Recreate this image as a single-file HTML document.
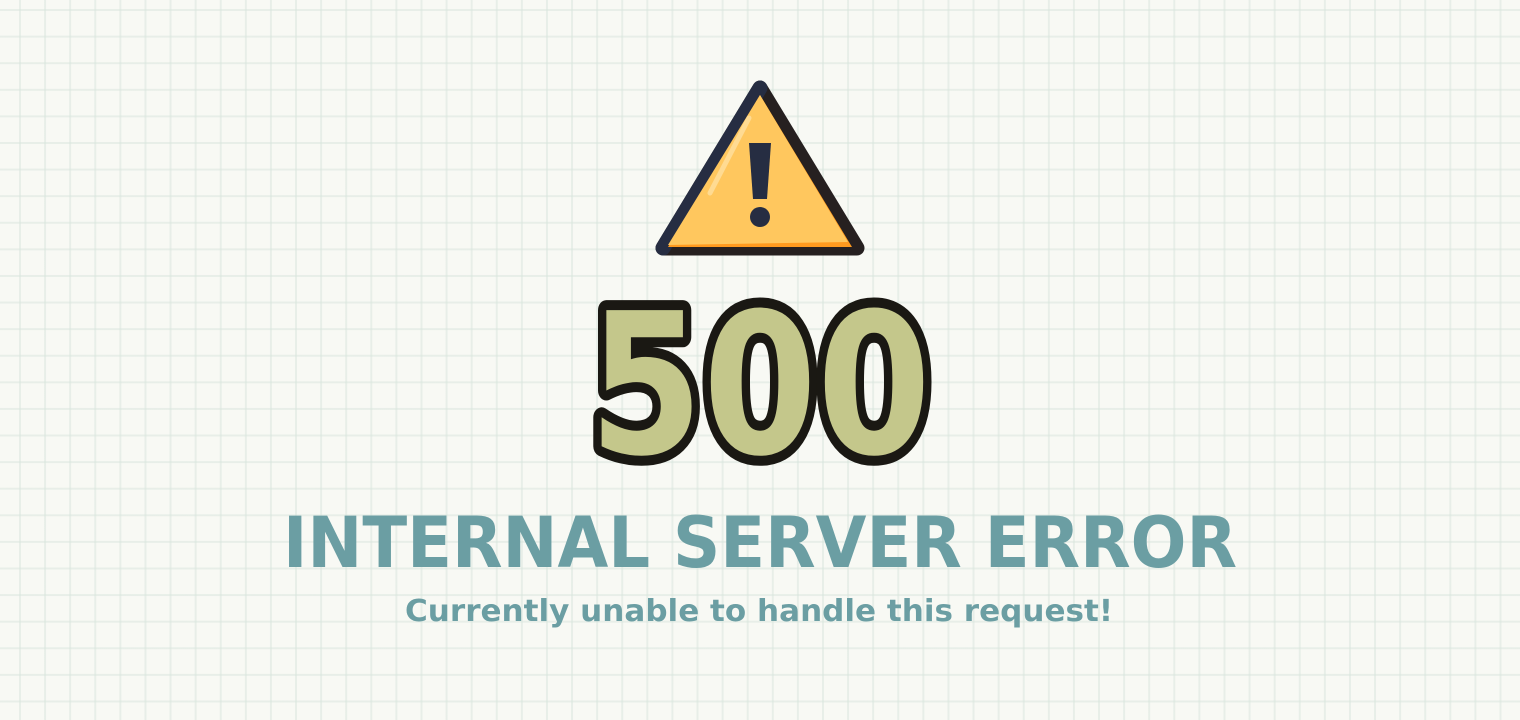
<!DOCTYPE html>
<html><head><meta charset="utf-8"><style>
html,body{margin:0;padding:0;}
body{width:1520px;height:720px;overflow:hidden;background:#f8f9f4;
background-image:linear-gradient(90deg,rgba(215,228,220,0.5) 2px,transparent 2px),linear-gradient(0deg,rgba(215,228,220,0.5) 2px,transparent 2px);
background-size:25.1px 26.6px;background-position:19px 11px;position:relative;font-family:"Liberation Sans",sans-serif;}
svg{position:absolute;left:0;top:0;}
</style></head><body>
<svg width="1520" height="720" viewBox="0 0 1520 720">
  <path d="M760 88 L857 248 L663 248 Z" fill="#262020" stroke="#262020" stroke-width="15" stroke-linejoin="round"/>
  <path d="M760 88 L663 248" stroke="#262d42" stroke-width="15" stroke-linecap="round"/>
  <path d="M760 95 L852 247 L668 247 Z" fill="#ff9a1f"/>
  <path d="M760 95 L848 242 L668 245 Z" fill="#ffc75e"/>
  <path d="M749 118 L710 193" stroke="#ffe0a0" stroke-width="5" stroke-linecap="round" opacity="0.8"/>
  <path d="M749 143 L771 143 L767 199 L753 199 Z" fill="#262d42"/>
  <circle cx="760" cy="217" r="10" fill="#262d42"/>
  <text x="760" y="453" text-anchor="middle" font-family="DejaVu Sans" font-weight="bold" font-size="196" fill="#c4c78b" stroke="#1a1813" stroke-width="20" stroke-linejoin="round" paint-order="stroke" textLength="342" lengthAdjust="spacingAndGlyphs">500</text>
  <text x="760" y="567" text-anchor="middle" font-family="DejaVu Sans" font-weight="bold" font-size="70" fill="#6b9ea3" textLength="954" lengthAdjust="spacingAndGlyphs">INTERNAL SERVER ERROR</text>
  <text x="759" y="621" text-anchor="middle" font-family="DejaVu Sans" font-weight="bold" font-size="30" fill="#6b9ea3" textLength="708" lengthAdjust="spacingAndGlyphs">Currently unable to handle this request!</text>
</svg>
</body></html>
